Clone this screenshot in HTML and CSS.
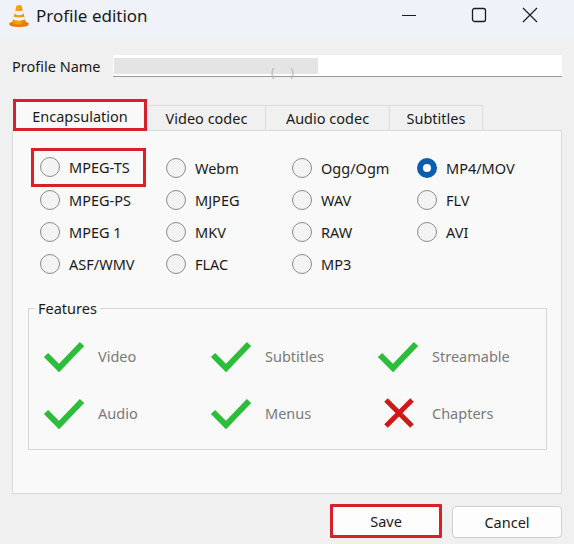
FILE: index.html
```html
<!DOCTYPE html>
<html>
<head>
<meta charset="utf-8">
<link rel="stylesheet" href="styles.css">
</head>
<body>
<div class="window">
  <div class="titlebar">
    <svg class="vlc" width="22" height="24" viewBox="0 0 22 24">
      <defs>
        <linearGradient id="cone" x1="0" x2="1" y1="0" y2="0">
          <stop offset="0" stop-color="#f08a00"/>
          <stop offset="0.5" stop-color="#ffa51a"/>
          <stop offset="1" stop-color="#e07000"/>
        </linearGradient>
      </defs>
      <path d="M1 19.5 Q1 23 11 23 Q21 23 21 19.5 L18.5 18 L3.5 18 Z" fill="#e87a00"/>
      <path d="M8.6 1.5 Q11 0.5 13.4 1.5 L18 19 Q11 22 4 19 Z" fill="url(#cone)"/>
      <path d="M7.3 6.5 Q11 8 14.7 6.5 L15.6 10 Q11 11.8 6.4 10 Z" fill="#f4f4f4"/>
      <path d="M5.7 12.5 Q11 14.5 16.3 12.5 L17.1 15.6 Q11 17.8 4.9 15.6 Z" fill="#f4f4f4"/>
    </svg>
    <span class="title">Profile edition</span>
    <div class="controls">
      <span class="ctl"><svg width="16" height="16" viewBox="0 0 16 16"><path d="M1 8.5 H15" stroke="#1a1a1a" stroke-width="1"/></svg></span>
      <span class="ctl"><svg width="16" height="16" viewBox="0 0 16 16"><rect x="1.5" y="1.5" width="13" height="13" rx="2" fill="none" stroke="#1a1a1a" stroke-width="1.3"/></svg></span>
      <span class="ctl"><svg width="16" height="16" viewBox="0 0 16 16"><path d="M1 1 L15 15 M15 1 L1 15" stroke="#1a1a1a" stroke-width="1.2"/></svg></span>
    </div>
  </div>

  <div class="body">
    <div class="name-row">
      <span class="label">Profile Name</span>
      <div class="input"><span class="blur"></span><span class="blur-paren">(&nbsp;&nbsp;&nbsp;&nbsp;&nbsp;)</span></div>
    </div>

    <div class="tabs">
      <div class="tab active hl">Encapsulation</div>
      <div class="tab">Video codec</div>
      <div class="tab">Audio codec</div>
      <div class="tab">Subtitles</div>
    </div>

    <div class="panel">
      <div class="radios">
        <label class="radio hl"><span class="dot"></span>MPEG-TS</label>
        <label class="radio"><span class="dot"></span>Webm</label>
        <label class="radio"><span class="dot"></span>Ogg/Ogm</label>
        <label class="radio"><span class="dot on"></span>MP4/MOV</label>
        <label class="radio"><span class="dot"></span>MPEG-PS</label>
        <label class="radio"><span class="dot"></span>MJPEG</label>
        <label class="radio"><span class="dot"></span>WAV</label>
        <label class="radio"><span class="dot"></span>FLV</label>
        <label class="radio"><span class="dot"></span>MPEG 1</label>
        <label class="radio"><span class="dot"></span>MKV</label>
        <label class="radio"><span class="dot"></span>RAW</label>
        <label class="radio"><span class="dot"></span>AVI</label>
        <label class="radio"><span class="dot"></span>ASF/WMV</label>
        <label class="radio"><span class="dot"></span>FLAC</label>
        <label class="radio"><span class="dot"></span>MP3</label>
      </div>

      <div class="features">
        <span class="legend">Features</span>
        <div class="feat-grid">
          <div class="feat"><svg class="ico" width="42" height="32" viewBox="0 0 42 32"><path d="M3 15 L16 28 L39 4" fill="none" stroke="#2cbd3a" stroke-width="6"/></svg>Video</div>
          <div class="feat"><svg class="ico" width="42" height="32" viewBox="0 0 42 32"><path d="M3 15 L16 28 L39 4" fill="none" stroke="#2cbd3a" stroke-width="6"/></svg>Subtitles</div>
          <div class="feat"><svg class="ico" width="42" height="32" viewBox="0 0 42 32"><path d="M3 15 L16 28 L39 4" fill="none" stroke="#2cbd3a" stroke-width="6"/></svg>Streamable</div>
          <div class="feat"><svg class="ico" width="42" height="32" viewBox="0 0 42 32"><path d="M3 15 L16 28 L39 4" fill="none" stroke="#2cbd3a" stroke-width="6"/></svg>Audio</div>
          <div class="feat"><svg class="ico" width="42" height="32" viewBox="0 0 42 32"><path d="M3 15 L16 28 L39 4" fill="none" stroke="#2cbd3a" stroke-width="6"/></svg>Menus</div>
          <div class="feat"><svg class="ico" width="42" height="32" viewBox="0 0 42 32"><path d="M9 3 L35 29 M35 3 L9 29" fill="none" stroke="#d01818" stroke-width="5"/></svg>Chapters</div>
        </div>
      </div>
    </div>

    <div class="buttons">
      <button class="btn save">Save</button>
      <button class="btn">Cancel</button>
    </div>
  </div>
</div>
</body>
</html>
```
FILE: styles.css
```css
* { box-sizing: border-box; }
html, body { margin: 0; padding: 0; }
body {
  width: 574px;
  height: 544px;
  background: #f0f0f0;
  font-family: "Noto Sans", "Open Sans", sans-serif;
  color: #1a1a1a;
  overflow: hidden;
}
.window { width: 574px; height: 544px; display: flex; flex-direction: column; }

.titlebar {
  height: 36px;
  background: #eff3f9;
  display: flex;
  align-items: center;
  padding-left: 8px;
}
.vlc { margin-top: -4px; }
.title { font-size: 17px; margin-left: 6px; margin-top: -6px; }
.controls { margin-left: auto; display: flex; margin-top: -6px; }
.ctl { width: 70px; display: flex; justify-content: center; }
.ctl:last-child { width: 60px; justify-content: flex-start; padding-left: 8px; }

.body { padding: 19px 12px 0 12px; display: flex; flex-direction: column; }

.name-row { display: flex; align-items: center; height: 22px; }
.label { font-size: 14.5px; width: 101px; }
.input {
  flex: 1;
  height: 22px;
  background: #fff;
  border-bottom: 1px solid #9a9a9a;
  display: flex;
  align-items: center;
  padding-left: 1px;
  position: relative;
}
.blur { width: 204px; height: 16px; background: #e4e4e4; }
.blur-paren { position: absolute; left: 158px; top: 9px; font-size: 12px; color: #b5b5b5; }

.tabs { display: flex; margin-top: 27px; padding-left: 2px; align-items: flex-end; height: 26px; }
.tab {
  height: 25px;
  border: 1px solid #dcdcdc;
  border-bottom: none;
  background: #f0f0f0;
  font-size: 14.5px;
  display: flex;
  align-items: center;
  justify-content: center;
  margin-left: -1px;
  flex: none;
}
.tab:nth-child(1) { width: 132px; margin-left: 0; }
.tab:nth-child(2) { width: 119px; margin-left: 1px; }
.tab:nth-child(3) { width: 125px; }
.tab:nth-child(4) { width: 94px; }
.tab.active { background: #f9f9f9; position: relative; z-index: 1; height: 30px; }
.hl { outline: 3px solid #d7202c; outline-offset: -1px; }
.tab.hl { outline-offset: -2px; }

.panel {
  height: 364px;
  background: #f9f9f9;
  border: 1px solid #d9d9d9;
  padding: 21px 0 0 27px;
}

.radios {
  display: grid;
  grid-template-columns: 126px 126px 125px 120px;
  grid-auto-rows: 32px;
}
.radio {
  display: flex;
  align-items: center;
  font-size: 14.5px;
  color: #1a1a1a;
  height: 32px;
  width: fit-content;
}
.radio.hl { margin-left: -6px; padding-left: 6px; padding-right: 13px; outline-offset: 0px; margin-top: -1px; height: 33px; padding-bottom: 1px; }
.dot {
  width: 20px;
  height: 20px;
  border-radius: 50%;
  border: 1px solid #8b8b8b;
  background: #f3f3f3;
  margin-right: 9px;
  flex: none;
}
.dot.on {
  border: 6px solid #0a5eb2;
  background: #fff;
}

.features {
  position: relative;
  margin: 28px 0 0 -12px;
  width: 519px;
  height: 142px;
  border: 1px solid #d6d6d6;
  padding: 31px 0 0 14px;
}
.legend {
  position: absolute;
  top: -11px;
  left: 6px;
  padding: 0 3px;
  background: #f9f9f9;
  font-size: 14.5px;
  color: #1a1a1a;
}
.feat-grid {
  display: grid;
  grid-template-columns: 167px 167px 150px;
  grid-auto-rows: 32px;
  row-gap: 25px;
}
.feat {
  display: flex;
  align-items: center;
  font-size: 14.5px;
  color: #7a7a7a;
}
.ico { margin-right: 13px; flex: none; }

.buttons {
  display: flex;
  justify-content: flex-end;
  gap: 10px;
  margin-top: 12px;
}
.btn {
  font-family: inherit;
  font-size: 14.5px;
  color: #1a1a1a;
  background: #fdfdfd;
  border: 1px solid #d0d0d0;
  border-radius: 4px;
  height: 32px;
  width: 110px;
}
.btn.save { border: 3px solid #d7202c; border-radius: 1px; width: 112px; height: 34px; margin-top: -2px; }
```
